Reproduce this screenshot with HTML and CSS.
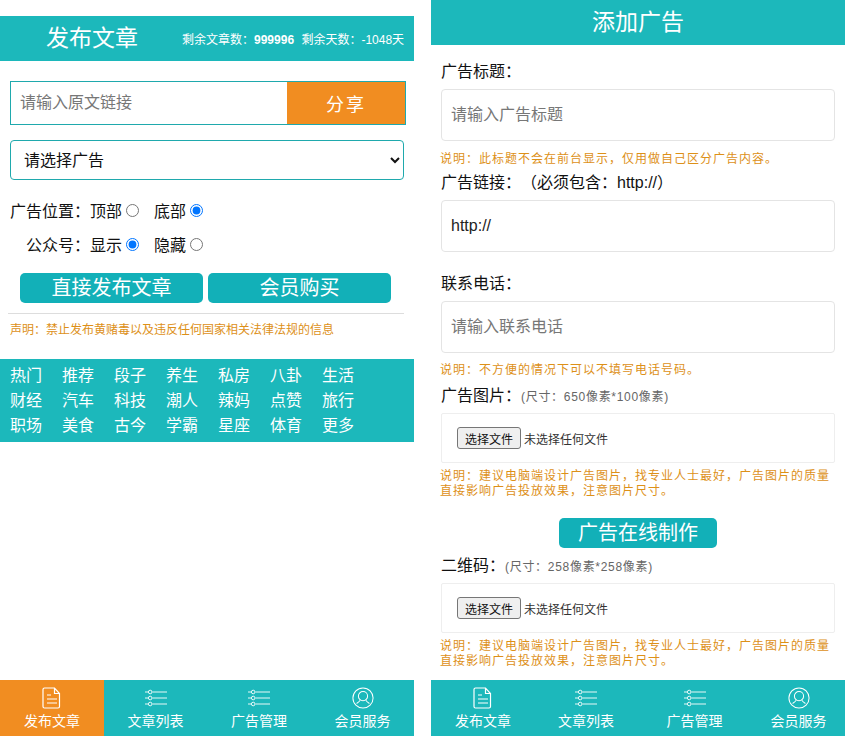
FILE: index.html
```html
<!DOCTYPE html>
<html lang="zh-CN">
<head>
    <meta charset="UTF-8">
    <title>发布文章</title>
    <link rel="stylesheet" href="styles.css">
</head>
<body>
    <svg class="icon-defs" width="0" height="0">
        <symbol id="icon-doc" viewBox="0 0 20 22">
            <path d="M2.5 1h10l5 5.5v13a1.5 1.5 0 0 1-1.500 1.500h-13.500a1.500 1.500 0 0 1-1.500-1.500v-17a1.500 1.500 0 0 1 1.500-1.500z M12.500 1v5.500h5 M5 8h4 M5 12h10 M5 16h10" fill="none" stroke="currentColor" stroke-width="1.200"/>
        </symbol>
        <symbol id="icon-list" viewBox="0 0 24 20">
            <g fill="none" stroke="currentColor" stroke-width="0.900">
                <path d="M1 4h3 M8.500 4h14.500 M1 10h3 M8.500 10h14.500 M1 16h3 M8.500 16h14.500"/>
                <circle cx="6.200" cy="4" r="1.800"/>
                <circle cx="6.200" cy="10" r="1.800"/>
                <circle cx="6.200" cy="16" r="1.800"/>
            </g>
        </symbol>
        <symbol id="icon-user" viewBox="0 0 24 24">
            <g fill="none" stroke="currentColor" stroke-width="1.100">
                <circle cx="12" cy="12" r="11"/>
                <circle cx="12" cy="10" r="5"/>
                <path d="M9 14.500c-1 1.500-2.500 2.500-4 3.500 M15 14.500c1 1.500 2.500 2.500 4 3.500"/>
            </g>
        </symbol>
    </svg>

    <div class="screens">
        <!-- left screen -->
        <section class="screen screen-publish">
            <header class="bar bar-publish">
                <h1 class="bar-title">发布文章</h1>
                <p class="bar-stats">剩余文章数：<b>999996</b> 剩余天数：-1048天</p>
            </header>

            <form class="share-form">
                <input class="share-input" type="text" placeholder="请输入原文链接">
                <button class="share-btn" type="button">分享</button>
            </form>

            <select class="ad-select">
                <option>请选择广告</option>
            </select>

            <div class="radio-row">
                <span class="radio-label">广告位置：</span>
                <label class="radio-item">顶部<input type="radio" name="pos"></label>
                <label class="radio-item">底部<input type="radio" name="pos" checked></label>
            </div>
            <div class="radio-row radio-row-second">
                <span class="radio-label">公众号：</span>
                <label class="radio-item">显示<input type="radio" name="mp" checked></label>
                <label class="radio-item">隐藏<input type="radio" name="mp"></label>
            </div>

            <div class="action-row">
                <button class="teal-btn action-btn" type="button">直接发布文章</button>
                <button class="teal-btn action-btn" type="button">会员购买</button>
            </div>

            <hr class="rule">
            <p class="notice">声明：禁止发布黄赌毒以及违反任何国家相关法律法规的信息</p>

            <nav class="categories">
                <a>热门</a><a>推荐</a><a>段子</a><a>养生</a><a>私房</a><a>八卦</a><a>生活</a>
                <a>财经</a><a>汽车</a><a>科技</a><a>潮人</a><a>辣妈</a><a>点赞</a><a>旅行</a>
                <a>职场</a><a>美食</a><a>古今</a><a>学霸</a><a>星座</a><a>体育</a><a>更多</a>
            </nav>

            <footer class="tabs">
                <a class="tab tab-active"><svg class="tab-icon"><use href="#icon-doc"/></svg>发布文章</a>
                <a class="tab"><svg class="tab-icon"><use href="#icon-list"/></svg>文章列表</a>
                <a class="tab"><svg class="tab-icon"><use href="#icon-list"/></svg>广告管理</a>
                <a class="tab"><svg class="tab-icon"><use href="#icon-user"/></svg>会员服务</a>
            </footer>
        </section>

        <!-- right screen -->
        <section class="screen screen-ad">
            <header class="bar bar-ad">
                <h1 class="bar-title">添加广告</h1>
            </header>

            <form class="ad-form">
                <label class="field-label field-label-first">广告标题：</label>
                <input class="field-input" type="text" placeholder="请输入广告标题">
                <p class="field-note">说明：此标题不会在前台显示，仅用做自己区分广告内容。</p>

                <label class="field-label">广告链接：（必须包含：http://）</label>
                <input class="field-input" type="text" value="http://">

                <label class="field-label field-label-open">联系电话：</label>
                <input class="field-input" type="text" placeholder="请输入联系电话">
                <p class="field-note field-note-phone">说明：不方便的情况下可以不填写电话号码。</p>

                <label class="field-label field-label-image">广告图片：<small class="field-size">(尺寸：650像素*100像素)</small></label>
                <div class="file-box">
                    <button class="file-btn" type="button">选择文件</button>
                    <span class="file-name">未选择任何文件</span>
                </div>
                <p class="field-note field-note-file">说明：建议电脑端设计广告图片，找专业人士最好，广告图片的质量直接影响广告投放效果，注意图片尺寸。</p>

                <div class="maker-row">
                    <button class="teal-btn maker-btn" type="button">广告在线制作</button>
                </div>

                <label class="field-label field-label-qr">二维码：<small class="field-size">(尺寸：258像素*258像素)</small></label>
                <div class="file-box">
                    <button class="file-btn" type="button">选择文件</button>
                    <span class="file-name">未选择任何文件</span>
                </div>
                <p class="field-note field-note-file">说明：建议电脑端设计广告图片，找专业人士最好，广告图片的质量直接影响广告投放效果，注意图片尺寸。</p>
            </form>

            <footer class="tabs tabs-ad">
                <a class="tab"><svg class="tab-icon"><use href="#icon-doc"/></svg>发布文章</a>
                <a class="tab"><svg class="tab-icon"><use href="#icon-list"/></svg>文章列表</a>
                <a class="tab"><svg class="tab-icon"><use href="#icon-list"/></svg>广告管理</a>
                <a class="tab"><svg class="tab-icon"><use href="#icon-user"/></svg>会员服务</a>
            </footer>
        </section>
    </div>
</body>
</html>
```

FILE: styles.css
```css
* {
    box-sizing: border-box;
}
body {
    margin: 0;
    background: #fff;
    color: #222;
    font-family: "Liberation Sans", "Noto Sans CJK SC", sans-serif;
    font-size: 16px;
    text-spacing-trim: space-all;
}
.icon-defs {
    display: block;
    height: 0;
}
.screens {
    display: flex;
    gap: 17px;
    width: 846px;
    height: 736px;
    overflow: hidden;
}
.screen {
    display: flex;
    flex-direction: column;
    width: 414px;
    height: 736px;
}

/* top bars */
.bar {
    display: flex;
    align-items: center;
    height: 45px;
    flex: none;
    background: #1cb8bb;
    color: #fff;
}
.bar-publish {
    margin-top: 16px;
    padding-left: 46px;
}
.bar-ad {
    justify-content: center;
}
.bar-title {
    margin: 0;
    font-size: 23px;
    font-weight: 400;
    line-height: 45px;
}
.bar-stats {
    margin: 0 0 0 44px;
    font-size: 12px;
    white-space: nowrap;
    word-spacing: 4px;
}

/* left screen form */
.share-form {
    display: flex;
    width: 396px;
    height: 44px;
    margin: 20px 0 0 10px;
    border: 1px solid #1fa9ad;
}
.share-input {
    flex: 1;
    min-width: 0;
    padding: 0 9px;
    border: 0;
    outline: 0;
    font: inherit;
}
.share-input::placeholder,
.field-input::placeholder {
    color: #777;
}
.share-btn {
    width: 118px;
    padding-bottom: 2px;
    border: 0;
    background: #f18d21;
    color: #fff;
    font: inherit;
    font-size: 18px;
    letter-spacing: 2px;
}
.ad-select {
    display: block;
    width: 394px;
    height: 40px;
    margin: 15px 0 0 10px;
    padding: 0 9px;
    border: 1px solid #1fa9ad;
    border-radius: 4px;
    background: #fff;
    color: #111;
    font: inherit;
}
.radio-row {
    display: flex;
    align-items: center;
    height: 24px;
    margin: 18px 0 0 10px;
    color: #111;
}
.radio-row-second {
    margin-top: 10px;
    padding-left: 16px;
}
.radio-label {
    display: block;
}
.radio-row .radio-label {
    width: 80px;
}
.radio-row-second .radio-label {
    width: 64px;
}
.radio-item {
    display: flex;
    align-items: center;
    width: 64px;
}
.radio-item input {
    width: 13px;
    height: 13px;
    margin: 0 0 0 4px;
}
.action-row {
    display: flex;
    gap: 5px;
    margin: 17px 0 0 20px;
}
.teal-btn {
    height: 30px;
    padding: 0;
    border: 0;
    border-radius: 5px;
    background: #12b0b8;
    color: #fff;
    font: inherit;
    font-size: 20px;
    line-height: 30px;
}
.action-btn {
    width: 183px;
}
.rule {
    width: 396px;
    height: 1px;
    margin: 10px 0 0 8px;
    border: 0;
    background: #ddd;
}
.notice {
    margin: 8px 0 0 10px;
    color: #dd9018;
    font-size: 12px;
    line-height: 16px;
}
.categories {
    display: grid;
    grid-template-columns: repeat(7, 52px);
    grid-auto-rows: 25px;
    align-items: center;
    height: 83px;
    margin-top: 21px;
    padding: 4px 0 4px 10px;
    background: #1cb8bb;
    color: #fff;
    line-height: 25px;
}

/* bottom tabs */
.tabs {
    display: grid;
    grid-template-columns: 104px 103px 104px 103px;
    flex: none;
    height: 56px;
    margin-top: auto;
    background: #1cb8bb;
    color: #fff;
}
.tabs-ad {
    grid-template-columns: 104px 102px 115px 93px;
}
.tab {
    display: flex;
    flex-direction: column;
    align-items: center;
    padding-top: 7px;
    font-size: 14px;
    line-height: 20px;
}
.tab-active {
    background: #f18d21;
}
.tab-icon {
    display: block;
    width: 24px;
    height: 22px;
    margin-bottom: 2px;
}

/* right screen form */
.ad-form {
    display: block;
    padding: 0 10px;
}
.field-label {
    display: block;
    height: 24px;
    margin-top: 4px;
    color: #111;
    line-height: 24px;
}
.field-label-first {
    margin-top: 15px;
}
.field-label-open {
    margin-top: 20px;
}
.field-label-image {
    margin-top: 6px;
}
.field-label-qr {
    margin-top: 0;
}
.field-size {
    color: #666;
    font-size: 12px;
    letter-spacing: 0.7px;
}
.field-input {
    display: block;
    width: 394px;
    height: 52px;
    margin-top: 5px;
    padding: 0 9px;
    border: 1px solid #e4e4e4;
    border-radius: 4px;
    outline: 0;
    color: #222;
    font: inherit;
}
.field-note {
    margin: 11px 0 0 -1px;
    color: #dd9018;
    font-size: 12px;
    letter-spacing: 1px;
    line-height: 15px;
}
.field-note-phone {
    margin-top: 10px;
}
.field-note-file {
    margin-top: 6px;
}
.file-box {
    display: flex;
    align-items: center;
    width: 394px;
    height: 50px;
    margin-top: 5px;
    padding-left: 15px;
    border: 1px solid #eee;
    border-radius: 2px;
}
.file-btn {
    width: 64px;
    height: 22px;
    padding: 0;
    border: 1px solid #767676;
    border-radius: 3px;
    background: #efefef;
    color: #111;
    font: inherit;
    font-size: 12px;
}
.file-name {
    margin-left: 3px;
    color: #333;
    font-size: 12px;
}
.maker-row {
    display: flex;
    justify-content: center;
    margin-top: 19px;
    margin-bottom: 6px;
}
.maker-btn {
    width: 158px;
}
```
